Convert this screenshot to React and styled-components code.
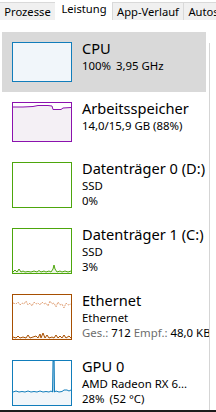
import React from "react";
import styled, { createGlobalStyle } from "styled-components";

const GlobalStyle = createGlobalStyle`
  html, body {
    margin: 0;
    padding: 0;
    background: #ffffff;
  }
  body {
    font-family: "Noto Sans", "Open Sans", sans-serif;
    color: #000000;
  }
`;

const tabs = [
  { label: "Prozesse", width: 57 },
  { label: "Leistung", width: 58, active: true },
  { label: "App-Verlauf", width: 72 },
  { label: "Autostart", width: 60 },
];

// graph paths are drawn in the inner box coordinates (58 x h)
const items = [
  {
    title: "CPU",
    color: "#117dbb",
    fill: "#f1f6fa",
    height: 40,
    selected: true,
    lines: [["100%", "3,95 GHz"]],
  },
  {
    title: "Arbeitsspeicher",
    color: "#8b12ae",
    fill: "#ffffff",
    height: 40,
    lines: [["14,0/15,9 GB (88%)"]],
    graph: "mem",
  },
  {
    title: "Datenträger 0 (D:)",
    color: "#4da60c",
    fill: "#ffffff",
    height: 46,
    lines: [["SSD"], ["0%"]],
  },
  {
    title: "Datenträger 1 (C:)",
    color: "#4da60c",
    fill: "#ffffff",
    height: 46,
    lines: [["SSD"], ["3%"]],
    graph: "disk",
  },
  {
    title: "Ethernet",
    color: "#a74f01",
    fill: "#ffffff",
    height: 46,
    lines: [["Ethernet"], "net"],
    graph: "net",
  },
  {
    title: "GPU 0",
    color: "#117dbb",
    fill: "#ffffff",
    height: 46,
    lines: [["AMD Radeon RX 6..."], ["28%", "(52 °C)"]],
    graph: "gpu",
  },
];

function Graph({ kind, color, h }) {
  if (kind === "mem") {
    const line = "M0 4 L10 4 L20 3.5 L25 2.5 L35 2.5 L39 3 L40 6.5 L48 6.5 L50 5 L58 4.5";
    return (
      <svg width="58" height={h} viewBox={`0 0 58 ${h}`}>
        <path d={`${line} L58 ${h} L0 ${h} Z`} fill="#f4f0f5" />
        <path d={line} fill="none" stroke={color} strokeWidth="1" />
      </svg>
    );
  }
  if (kind === "disk") {
    const line =
      "M0 43 L2 41 L4 43 L6 40 L8 43 L10 42 L12 43 L15 42.5 L18 43 L21 42 L24 43 L26 41.5 L28 43 L31 42 L33 43 L36 42 L38 43 L40 40 L41 36 L42 40 L44 43 L47 42 L49 43 L52 42 L55 43 L58 42";
    return (
      <svg width="58" height={h} viewBox={`0 0 58 ${h}`}>
        <path d={`${line} L58 ${h} L0 ${h} Z`} fill="#edf6e6" />
        <path d={line} fill="none" stroke={color} strokeWidth="1" />
      </svg>
    );
  }
  if (kind === "net") {
    const send =
      "M0 8 L3 9 L5 7 L7 10 L9 8 L11 9 L13 6 L15 10 L17 8 L19 11 L21 7 L23 9 L25 8 L27 10 L29 7 L31 9 L33 8 L35 11 L37 6 L39 9 L41 8 L43 12 L45 7 L47 10 L49 9 L51 13 L53 8 L55 10 L58 9";
    const recv =
      "M0 42 L3 43 L5 41 L7 43 L10 42 L13 43 L15 40 L17 43 L20 42 L23 41 L25 43 L27 39 L28 43 L30 38 L32 43 L34 40 L36 43 L39 42 L41 43 L43 40 L45 43 L47 41 L49 43 L51 40 L53 43 L56 41 L58 43";
    return (
      <svg width="58" height={h} viewBox={`0 0 58 ${h}`}>
        <path d={`${recv} L58 ${h} L0 ${h} Z`} fill="#fcf3eb" />
        <path d={send} fill="none" stroke="#e1a37a" strokeWidth="1" strokeDasharray="2 1" />
        <path d={recv} fill="none" stroke={color} strokeWidth="1" />
      </svg>
    );
  }
  if (kind === "gpu") {
    const line =
      "M0 31 L3 30 L6 31 L9 30.5 L12 31 L15 30 L18 31 L21 30.5 L24 31 L27 30 L30 31 L33 30.5 L36 31 L38 30 L39.5 31 L40 0 L41 0 L41.5 31 L43 30 L46 31 L49 30.5 L51 29 L54 29 L56 30 L58 29";
    return (
      <svg width="58" height={h} viewBox={`0 0 58 ${h}`}>
        <path d={`${line} L58 ${h} L0 ${h} Z`} fill="#f1f6fa" />
        <path d={line} fill="none" stroke={color} strokeWidth="1" />
        <path d="M41 0 L41 31" stroke={color} strokeWidth="1" opacity="0.6" />
      </svg>
    );
  }
  return null;
}

export default function App() {
  return (
    <Page>
      <GlobalStyle />
      <TabBar>
        {tabs.map((t) => (
          <Tab key={t.label} $active={t.active} $w={t.width}>
            {t.label}
          </Tab>
        ))}
      </TabBar>
      <Body>
        <Sidebar>
          {items.map((it) => (
            <Row key={it.title} $selected={it.selected} $h={it.height + 20}>
              <Thumb $color={it.color} $fill={it.fill} $h={it.height}>
                <Graph kind={it.graph} color={it.color} h={it.height - 2} />
              </Thumb>
              <Info>
                <Title>{it.title}</Title>
                {it.lines.map((l, i) =>
                  l === "net" ? (
                    <Sub key={i}>
                      <span>
                        <Muted>Ges.:</Muted> 712 <Muted>Empf.:</Muted> 48,0 KB
                      </span>
                    </Sub>
                  ) : (
                    <Sub key={i}>
                      {l.map((part) => (
                        <span key={part}>{part}</span>
                      ))}
                    </Sub>
                  )
                )}
              </Info>
            </Row>
          ))}
        </Sidebar>
        <Detail />
      </Body>
      <BottomEdge />
    </Page>
  );
}

const Page = styled.div`
  width: 216px;
  height: 412px;
  overflow: hidden;
  display: flex;
  flex-direction: column;
  background: #ffffff;
`;

const TabBar = styled.div`
  display: flex;
  height: 20px;
  flex: none;
  white-space: nowrap;
`;

const Tab = styled.div`
  flex: none;
  box-sizing: border-box;
  width: ${(p) => p.$w}px;
  font-size: 11.2px;
  line-height: 16px;
  text-align: center;
  height: ${(p) => (p.$active ? "20px" : "18px")};
  margin-top: ${(p) => (p.$active ? "0" : "2px")};
  padding-top: ${(p) => (p.$active ? "0" : "1px")};
  background: ${(p) => (p.$active ? "#ffffff" : "#f0f0f0")};
  border: 1px solid ${(p) => (p.$active ? "#ffffff" : "#d9d9d9")};
  border-bottom: none;
  margin-left: -1px;
  color: #000000;
`;

const Body = styled.div`
  flex: 1;
  display: flex;
  min-height: 0;
`;

const Sidebar = styled.div`
  width: 207px;
  flex: none;
  padding: 12px 0 0 2px;
  overflow: hidden;
  display: flex;
  flex-direction: column;
`;

const Row = styled.div`
  flex: none;
  display: flex;
  align-items: flex-start;
  gap: 10px;
  height: ${(p) => p.$h}px;
  width: 204px;
  box-sizing: border-box;
  padding-left: 10px;
  background: ${(p) => (p.$selected ? "#d9d9d9" : "transparent")};
  white-space: nowrap;
`;

const Thumb = styled.div`
  flex: none;
  margin-top: 10px;
  width: 60px;
  height: ${(p) => p.$h}px;
  box-sizing: border-box;
  border: 1px solid ${(p) => p.$color};
  background: ${(p) => p.$fill};
  display: flex;
  svg {
    display: block;
  }
`;

const Info = styled.div`
  margin-top: 6px;
  display: flex;
  flex-direction: column;
  min-width: 0;
`;

const Title = styled.div`
  font-size: 14.6px;
  line-height: 20px;
  color: #000000;
`;

const Sub = styled.div`
  font-size: 11.4px;
  line-height: 15px;
  color: #000000;
  display: flex;
  gap: 5px;
`;

const Muted = styled.span`
  color: #6d6d6d;
`;

const Detail = styled.div`
  flex: 1;
  margin-top: 23px;
  border-left: 1px solid #d5d5d5;
`;

const BottomEdge = styled.div`
  flex: none;
  height: 2px;
  background: #1b1b1b;
`;
